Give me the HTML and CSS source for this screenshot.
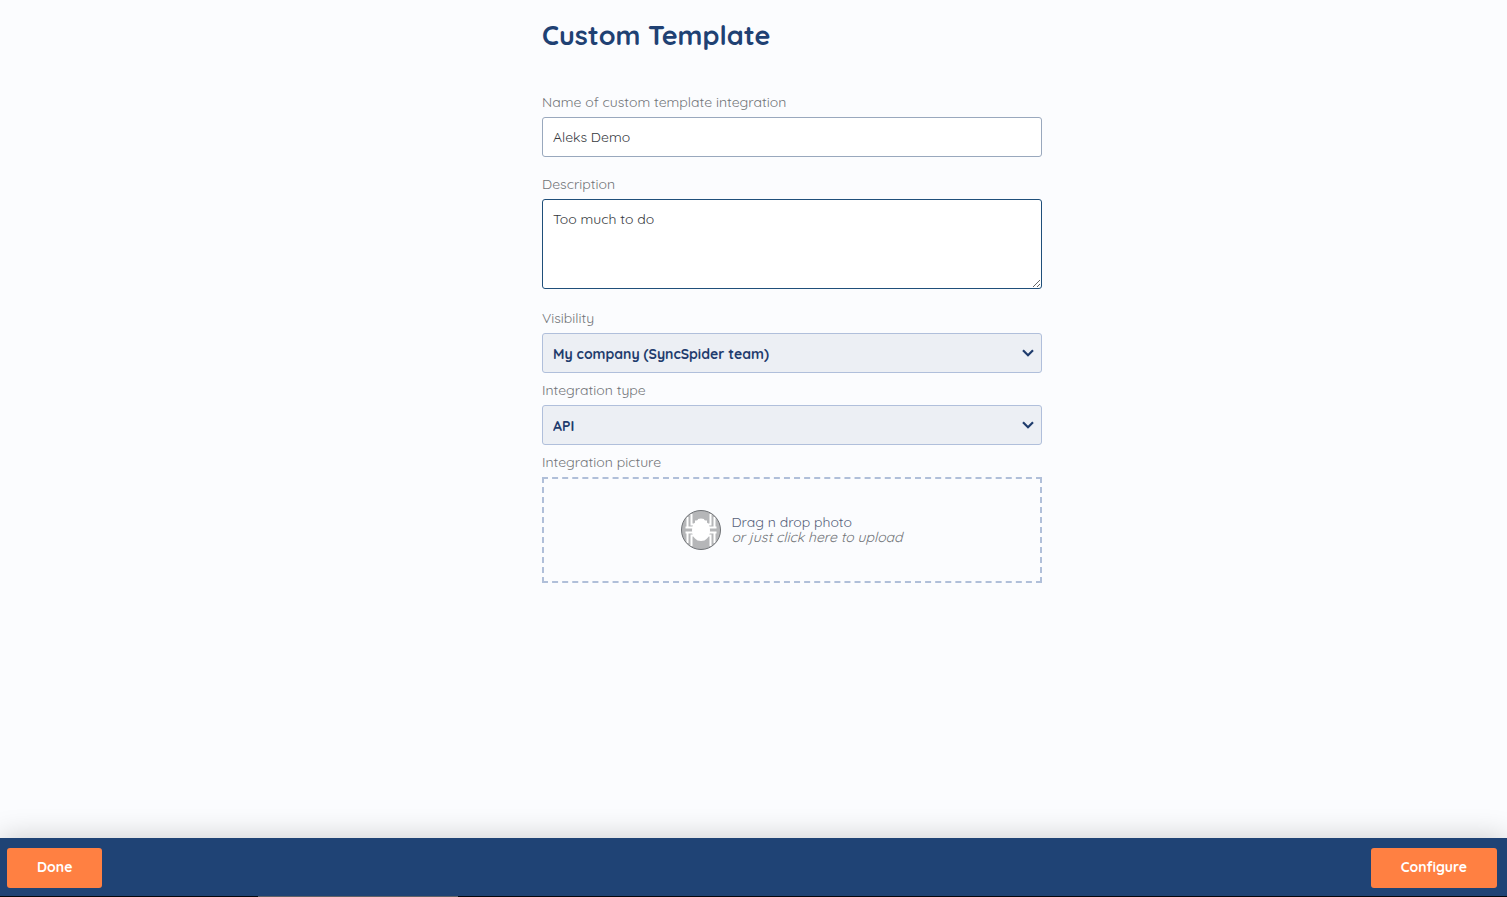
FILE: index.html
```
<!DOCTYPE html>
<html lang="en">
<head>
    <meta charset="UTF-8">
    <meta name="viewport" content="width=device-width, initial-scale=1.0">
    <title>Custom Template</title>
    <link rel="stylesheet" href="styles.css">
</head>
<body>
    <main class="content">
        <form class="template-form" id="templateForm">
            <h1>Custom Template</h1>

            <div class="field">
                <label for="name">Name of custom template integration</label>
                <input class="control" type="text" id="name" value="Aleks Demo">
            </div>

            <div class="field field-large">
                <label for="description">Description</label>
                <textarea class="control active" id="description">Too much to do</textarea>
            </div>

            <div class="field field-select">
                <label for="visibility">Visibility</label>
                <div class="select-wrap">
                    <select class="control" id="visibility">
                        <option>My company (SyncSpider team)</option>
                    </select>
                    <svg class="chevron" viewBox="0 0 12 8" aria-hidden="true">
                        <path d="M1 1.2 6 6.2 11 1.2"/>
                    </svg>
                </div>
            </div>

            <div class="field field-select">
                <label for="type">Integration type</label>
                <div class="select-wrap">
                    <select class="control" id="type">
                        <option>API</option>
                    </select>
                    <svg class="chevron" viewBox="0 0 12 8" aria-hidden="true">
                        <path d="M1 1.2 6 6.2 11 1.2"/>
                    </svg>
                </div>
            </div>

            <div class="field">
                <label for="picture">Integration picture</label>
                <button class="dropzone" type="button" id="picture">
                    <svg class="spider" viewBox="0 0 40 40" aria-hidden="true">
                        <circle cx="20" cy="20" r="19.5" fill="#b5b6b8"/>
                        <g fill="none" stroke="#fff" stroke-width="2">
                            <path d="M10.5 4V14.5H15M6.5 7V17.5M4.5 17.5H14M4.5 22.5H14M6.5 33V22.5M10.5 36V25.5H15"/>
                            <path d="M29.5 4V14.5H25M33.5 7V17.5M35.5 17.5H26M35.5 22.5H26M33.5 33V22.5M29.5 36V25.5H25"/>
                        </g>
                        <path fill="#fff" d="M14 10.500Q17 10.500 17 9Q20 8.200 23 9Q23 10.500 26 10.500L26 12.500Q29 15 29 20.500Q29 25.500 26 28.500Q24 31 20 31Q16 31 14 28.500Q11 25.500 11 20.500Q11 15 14 12.500Z"/>
                        <circle cx="20" cy="20" r="19.5" fill="none" stroke="#6f7276"/>
                    </svg>
                    <span class="dropzone-text">
                        <span>Drag n drop photo</span>
                        <em>or just click here to upload</em>
                    </span>
                </button>
            </div>
        </form>
    </main>

    <footer class="footer">
        <div class="actions">
            <button class="btn" type="submit" form="templateForm">Done</button>
            <button class="btn" type="button">Configure</button>
        </div>
        <div class="scroll-line"><div class="scroll-thumb"></div></div>
    </footer>
</body>
</html>
```
FILE: styles.css
```
* {
    box-sizing: border-box;
}

body {
    margin: 0;
    min-height: 100vh;
    display: flex;
    flex-direction: column;
    background: #fbfcfe;
    color: #717478;
    font-family: Quicksand, Lato, sans-serif;
    font-size: 14px;
    font-weight: 400;
}

.content {
    flex: 1;
    padding: 18px 0 20px 77px;
}

.template-form {
    width: 100%;
    max-width: 500px;
    margin: 0 auto;
}

h1 {
    margin: 0 0 41px;
    color: #1f4173;
    font-size: 27px;
    font-weight: 700;
    line-height: 34px;
}

.field {
    margin-bottom: 18px;
}

.field-large {
    margin-bottom: 20px;
}

.field-select {
    margin-bottom: 8px;
}

label {
    display: block;
    margin-bottom: 6px;
    line-height: 18px;
}

.control {
    display: block;
    width: 100%;
    height: 40px;
    padding: 0 10px;
    border: 1px solid #99a8bd;
    border-radius: 3px;
    outline: none;
    background: #fff;
    color: #36393e;
    font: inherit;
}

textarea.control {
    height: 90px;
    padding-top: 10px;
    line-height: 18px;
    resize: vertical;
}

.control.active {
    border-color: #1f4f7a;
}

.select-wrap {
    position: relative;
}

select.control {
    appearance: none;
    padding-top: 2px;
    border-color: #b0bfdb;
    background: #eceff4;
    color: #1f3c6d;
    font-weight: 700;
}

.chevron {
    position: absolute;
    top: 16px;
    right: 8px;
    width: 12px;
    height: 8px;
    fill: none;
    stroke: #1f3c6d;
    stroke-width: 2.2;
    pointer-events: none;
}

.dropzone {
    display: flex;
    align-items: center;
    justify-content: center;
    gap: 10px;
    width: 100%;
    height: 106px;
    border: 2px dashed #b0bfd9;
    background: none;
    color: #56617a;
    font: inherit;
    line-height: 15px;
    text-align: left;
    cursor: pointer;
}

.spider {
    width: 40px;
    height: 40px;
}

.dropzone-text {
    display: flex;
    flex-direction: column;
}

.dropzone em {
    color: #717478;
}

.footer {
    background: #1f4375;
    box-shadow: 0 0 30px rgba(0, 0, 0, 0.2);
}

.actions {
    display: flex;
    justify-content: space-between;
    padding: 10px 10px 8px 7px;
}

.btn {
    height: 40px;
    padding: 0 30px 2px;
    border: none;
    border-radius: 3px;
    background: #ff8042;
    color: #fff;
    font: inherit;
    font-weight: 700;
    cursor: pointer;
}

.scroll-line {
    height: 1px;
    padding-left: 258px;
    background: #05080d;
}

.scroll-thumb {
    width: 200px;
    height: 1px;
    background: #626367;
}
```
